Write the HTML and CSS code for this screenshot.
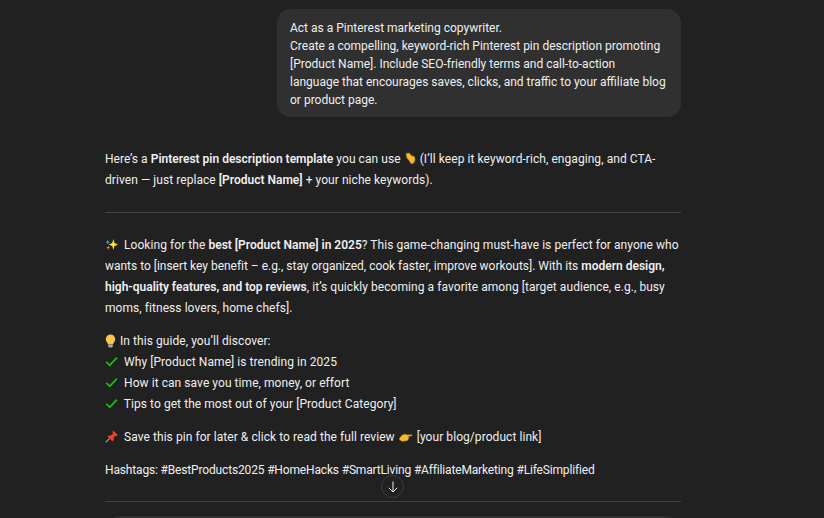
FILE: index.html
```html
<!DOCTYPE html>
<html lang="en">
<head>
<meta charset="utf-8">
<title>Pinterest pin description</title>
<link rel="stylesheet" href="styles.css">
</head>
<body>
<svg class="defs" width="0" height="0" aria-hidden="true">
  <symbol id="e-down" viewBox="0 0 14 14"><path d="M2 1.500l4-.5 1.500 2.500L11.500 5l.5 3.500-1.500 3.500-3 1-1.500-3L3 6.500z" fill="#f7b92d" stroke="#8d5f16" stroke-width=".6"/></symbol>
  <symbol id="e-spark" viewBox="0 0 14 14"><path d="M9 1l1.200 4.300L14 7l-3.800 1.700L9 13 7.800 8.700 4 7l3.800-1.700z" fill="#ffe81f"/><path d="M3 2l.7 1.800L5.400 4.500 3.700 5.200 3 7 2.300 5.200.6 4.500l1.700-.7z" fill="#35b8d8"/><path d="M3.500 8l.6 1.800 1.600.6-1.600.7-.6 1.900-.6-1.900-1.600-.7 1.600-.6z" fill="#f16d9b"/></symbol>
  <symbol id="e-bulb" viewBox="0 0 11 14"><path d="M5.500.5a4.700 4.700 0 0 1 3.100 8.200L8 10.500H3l-.6-1.800A4.700 4.700 0 0 1 5.500.5z" fill="#fbc74a"/><path d="M3.200 10.800h4.600v1.800l-1 1H4.200l-1-1z" fill="#a8a8a8"/></symbol>
  <symbol id="e-check" viewBox="0 0 14 14"><path d="M1.300 7.300l3.800 3.800 7.700-8.300" fill="none" stroke="#16c60c" stroke-width="1.800"/></symbol>
  <symbol id="e-pin" viewBox="0 0 14 14"><path d="M8.500 .3l5.200 5.200-1.500 1.100-1-.4-2 2.200.2 2.400-1.200 1.200L2.800 7l1.200-1.200 2.400.2 2.200-2-.4-1z" fill="#f0402c"/><path d="M5 9l-4.300 4.300" stroke="#a0a0a0" stroke-width="1.300"/></symbol>
  <symbol id="e-right" viewBox="0 0 16 14"><path d="M.8 9l3-3.500 3-1.300 2 .8h5.700v1.500l-4 .5.800 1.500-.8 1.500-1 1.500-5.500.8-3-1.500z" fill="#f7b92d" stroke="#8d5f16" stroke-width=".5"/></symbol>
</svg>
<main class="thread">
  <section class="user-row">
    <div class="bubble">Act as a Pinterest marketing copywriter.<br>Create a compelling, keyword-rich Pinterest pin description promoting<br>[Product Name]. Include SEO-friendly terms and call-to-action<br>language that encourages saves, clicks, and traffic to your affiliate blog<br>or product page.</div>
  </section>
  <section class="reply">
    <p>Here’s a <b>Pinterest pin description template</b> you can use <svg class="emoji"><use href="#e-down"/></svg> (I’ll keep it keyword-rich, engaging, and CTA-<br>driven — just replace <b>[Product Name]</b> + your niche keywords).</p>
    <hr class="rule first">
    <p><svg class="emoji lead"><use href="#e-spark"/></svg> Looking for the <b>best [Product Name] in 2025</b>? This game-changing must-have is perfect for anyone who<br><span class="tight">wants to [insert key benefit – e.g., stay organized, cook faster, improve workouts]. With its</span> <b>modern design,</b><br><b>high-quality features, and top reviews</b>, it’s quickly becoming a favorite among [target audience, e.g., busy<br>moms, fitness lovers, home chefs].</p>
    <p><svg class="emoji narrow"><use href="#e-bulb"/></svg> In this guide, you’ll discover:<br><svg class="emoji lead"><use href="#e-check"/></svg> Why [Product Name] is trending in 2025<br><svg class="emoji lead"><use href="#e-check"/></svg> How it can save you time, money, or effort<br><svg class="emoji lead"><use href="#e-check"/></svg> Tips to get the most out of your [Product Category]</p>
    <p><svg class="emoji lead"><use href="#e-pin"/></svg> Save this pin for later &amp; click to read the full review <svg class="emoji wide"><use href="#e-right"/></svg> [your blog/product link]</p>
    <p class="tags">Hashtags: #BestProducts2025 #HomeHacks #SmartLiving #AffiliateMarketing #LifeSimplified</p>
    <hr class="rule last">
  </section>
  <div class="composer"></div>
</main>
<button class="scroll-down" aria-label="Scroll down"><svg viewBox="0 0 14 14" width="14" height="14"><path d="M7 1.500v10.500M2.800 7.800L7 12l4.200-4.200" fill="none" stroke="#ececec" stroke-width="1"/></svg></button>
</body>
</html>
```
FILE: styles.css
```css
* { box-sizing: border-box; }
html, body { margin: 0; height: 518px; overflow: hidden; }
body {
  background: #212121;
  color: #efefef;
  font-family: Roboto, "Liberation Sans", sans-serif;
  font-size: 12px;
  position: relative;
}
.defs { position: absolute; }
.thread {
  width: 576px;
  height: 518px;
  overflow: hidden;
  margin-left: 105px;
  display: flex;
  flex-direction: column;
  padding-top: 9px;
}
.user-row { display: flex; justify-content: flex-end; flex: none; }
.bubble {
  background: #303030;
  border-radius: 14px;
  width: 404px;
  height: 108px;
  padding: 10px 13px 8px;
  line-height: 18px;
  white-space: nowrap;
}
.reply { flex: none; padding-top: 32px; line-height: 21px; white-space: nowrap; letter-spacing: .06px; }
.reply p { margin: 0 0 12px; }
.reply b { font-weight: 600; letter-spacing: 0; }
.reply .tight { letter-spacing: -.02px; }
.reply .tags { letter-spacing: -.16px; }
.rule { border: 0; height: 1px; background: #424242; margin: 0; }
.rule.first { margin: 21px 0 22px; }
.rule.last { margin-top: 20px; }
.emoji { width: 13px; height: 13px; vertical-align: -2px; }
.emoji.lead { margin-right: 3px; }
.emoji.narrow { width: 11px; height: 14px; vertical-align: -3px; margin-right: 1px; }
.emoji.wide { width: 16px; }
.composer {
  flex: none;
  margin-top: 14px;
  height: 60px;
  background: #303030;
  border-radius: 16px;
}
.scroll-down {
  position: absolute;
  left: 381px;
  top: 475px;
  width: 23px;
  height: 23px;
  padding: 0;
  border-radius: 50%;
  border: 1px solid #3d3d3d;
  background: #212121;
  display: flex;
  align-items: center;
  justify-content: center;
}
```
